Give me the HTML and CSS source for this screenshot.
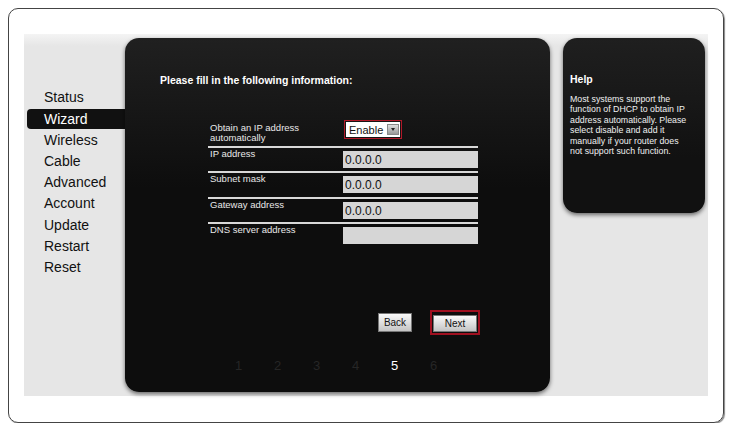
FILE: index.html
```html
<!DOCTYPE html>
<html lang="en">
<head>
  <meta charset="UTF-8" />
  <title>Router Setup Wizard</title>
  <link rel="stylesheet" href="styles.css">
</head>
<body>
  <div class="frame">
    <div class="screen">

      <ul class="nav">
        <li>Status</li>
        <li class="active">Wizard</li>
        <li>Wireless</li>
        <li>Cable</li>
        <li>Advanced</li>
        <li>Account</li>
        <li>Update</li>
        <li>Restart</li>
        <li>Reset</li>
      </ul>

      <div class="panel main">
        <h2>Please fill in the following information:</h2>

        <div class="form">
          <div class="row first">
            <label>Obtain an IP address<br>automatically</label>
            <div class="select-wrap">
              <div class="select">
                <span>Enable</span>
                <span class="arrow"></span>
              </div>
            </div>
          </div>
          <div class="row">
            <label>IP address</label>
            <input type="text" value="0.0.0.0">
          </div>
          <div class="row">
            <label>Subnet mask</label>
            <input type="text" value="0.0.0.0">
          </div>
          <div class="row">
            <label>Gateway address</label>
            <input type="text" value="0.0.0.0">
          </div>
          <div class="row">
            <label>DNS server address</label>
            <input type="text" value="">
          </div>
        </div>

        <div class="buttons">
          <button class="btn">Back</button>
          <div class="btn-focus"><button class="btn next">Next</button></div>
        </div>

        <div class="steps">
          <span>1</span>
          <span>2</span>
          <span>3</span>
          <span>4</span>
          <span class="current">5</span>
          <span>6</span>
        </div>
      </div>

      <div class="panel help">
        <h3>Help</h3>
        <p>Most systems support the function of DHCP to obtain IP address automatically. Please select disable and add it manually if your router does not support such function.</p>
      </div>

    </div>
  </div>
</body>
</html>
```

FILE: styles.css
```css
body {
  margin: 8px;
  background: #fff;
  font-family: 'Liberation Sans', Arial, sans-serif;
}

.frame {
  width: 716px;
  height: 415px;
  border: 1px solid #444;
  border-radius: 10px;
  box-shadow: 1px 1px 1px #888;
  padding: 25px 15px 0 15px;
  box-sizing: border-box;
}

.screen {
  display: flex;
  align-items: flex-start;
  background: linear-gradient(#f4f4f4, #e6e6e6 12px);
  height: 362px;
  padding-top: 4px;
  box-sizing: border-box;
}

/* left menu */
.nav {
  list-style: none;
  margin: 49px 0 0 0;
  padding: 0 0 0 3px;
  width: 98px;
}

.nav li {
  font-size: 14px;
  line-height: 21.3px;
  color: #111;
  padding-left: 17px;
}

.nav li.active {
  background: #111;
  color: #fff;
  border-radius: 4px 0 0 4px;
  line-height: 20px;
  margin: 0.6px 0 0.7px;
}

/* panels */
.panel {
  background: linear-gradient(#1f1f1f, #111 120px);
  border-radius: 14px;
  box-shadow: 0 2px 4px rgba(0, 0, 0, 0.55);
  color: #fff;
}

.main {
  width: 425px;
  height: 354px;
  padding: 36px 0 0 35px;
  box-sizing: border-box;
  background: linear-gradient(#202020, #0d0d0d 150px);
}

.main h2 {
  font-size: 10.5px;
  font-weight: bold;
  margin: 0;
}

.form {
  margin: 37px 0 0 48px;
  width: 270px;
}

.row {
  display: flex;
  align-items: flex-start;
  border-top: 2px solid #d8d8d8;
  height: 25.5px;
  box-sizing: border-box;
  padding-top: 1px;
}

.row.first {
  border-top: none;
  height: 22.5px;
  padding-top: 0;
}

.row label {
  width: 134px;
  padding-left: 2px;
  font-size: 9.5px;
  line-height: 10px;
  color: #e8e8e8;
}

.row input {
  width: 135px;
  height: 17px;
  margin-top: 2px;
  border: none;
  background: #d6d6d6;
  font-family: 'Liberation Sans', Arial, sans-serif;
  font-size: 12px;
  color: #111;
  padding: 1px 2px 0;
  box-sizing: border-box;
}

.select-wrap {
  border: 1px solid #b01828;
  padding: 1px;
  margin-top: -3px;
}

.select {
  display: flex;
  align-items: center;
  background: #fff;
  height: 15px;
  padding-left: 3px;
  font-size: 11px;
  color: #111;
  gap: 4px;
}

.arrow {
  width: 12px;
  height: 11px;
  margin-right: 1px;
  background: linear-gradient(#ddd, #999);
  border: 1px solid #888;
  box-sizing: border-box;
  position: relative;
}

.arrow::after {
  content: "";
  position: absolute;
  left: 3px;
  top: 3px;
  border-left: 2px solid transparent;
  border-right: 2px solid transparent;
  border-top: 3px solid #222;
}

/* buttons */
.buttons {
  display: flex;
  align-items: center;
  margin: 62px 0 0 218px;
  gap: 18px;
}

.btn {
  width: 34px;
  height: 19px;
  border: 1px solid #777;
  background: linear-gradient(#fafafa, #c4c4c4);
  font-family: 'Liberation Sans', Arial, sans-serif;
  font-size: 10px;
  color: #111;
  padding: 0;
}

.btn-focus {
  border: 2px solid #a01020;
  padding: 1px;
}

.btn.next {
  width: 44px;
  height: 17px;
}

/* step numbers */
.steps {
  display: flex;
  margin: 23px 0 0 75px;
}

.steps span {
  width: 39px;
  font-size: 13px;
  color: #262626;
}

.steps span.current {
  color: #fff;
}

/* help box */
.help {
  width: 142px;
  height: 175px;
  margin-left: 13px;
  padding: 35px 13px 0 7px;
  box-sizing: border-box;
}

.help h3 {
  font-size: 10.5px;
  font-weight: bold;
  margin: 0 0 9px;
}

.help p {
  font-size: 8.8px;
  line-height: 10.4px;
  margin: 0;
  color: #f0f0f0;
}
```
